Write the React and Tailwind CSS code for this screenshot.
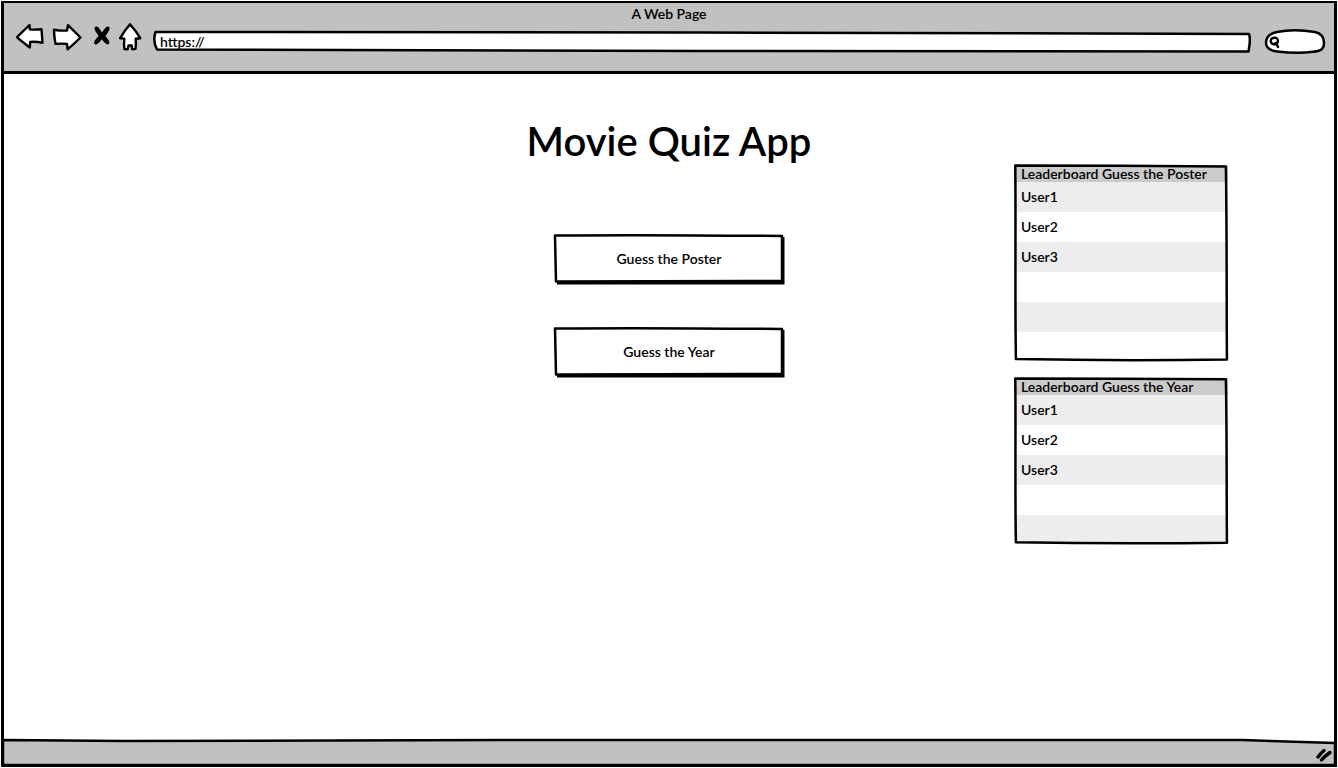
import React from "react";

const stroke = {
  fill: "none",
  stroke: "#000",
  strokeLinecap: "round",
  strokeLinejoin: "round",
};

/* Stretchable hand-drawn outline laid over the box that contains it. */
function Sketch({ d, width = 2.5, viewBox = "0 0 100 100", fill = "none" }) {
  return (
    <svg
      aria-hidden="true"
      viewBox={viewBox}
      preserveAspectRatio="none"
      className="pointer-events-none absolute inset-0 h-full w-full overflow-visible"
    >
      <path d={d} {...stroke} fill={fill} strokeWidth={width} vectorEffect="non-scaling-stroke" />
    </svg>
  );
}

function NavButton({ label, className, viewBox, children }) {
  return (
    <button type="button" aria-label={label} className={`h-7 ${className}`}>
      <svg viewBox={viewBox} className="h-7 w-full overflow-visible" {...stroke} strokeWidth="2.4">
        {children}
      </svg>
    </button>
  );
}

function BrowserBar() {
  return (
    <header className="border-b-[3px] border-black bg-[#c1c1c1] pb-[17px]">
      <p className="mt-px text-center leading-5">A Web Page</p>
      <div className="flex items-start pr-[9px] pl-[11px]">
        <nav aria-label="Browser" className="flex w-[138px] shrink-0 gap-2">
          <NavButton label="Back" className="w-[29px]" viewBox="15 24 29 28">
            <path fill="#fff" d="M17 37.2 29.5 25l.4 4.4c4 .5 8 .2 11.600-.2l1 13.500c-4-.8-8.500-1-12.300-.8l-.4 5.600C25.500 44.200 21 41 17 37.200Z" />
          </NavButton>
          <NavButton label="Forward" className="w-[30px]" viewBox="52 24 30 28">
            <path fill="#fff" d="M80.500 37.500 68 25.200l-1 5.300c-4.200.3-8.800 0-13-.8.2 5 .4 9.500 1.600 14.200 3.800-.3 7.800-.6 11.400.100l.6 5.400c4.200-3.600 8.600-7.600 12.900-11.900Z" />
          </NavButton>
          <NavButton label="Stop" className="w-[21px]" viewBox="90 24 21 28">
            <path fill="#000" stroke="none" d="M94.700 27.500c1-1.800 3.200-1 4.200.400l3.200 4.500c1.400-2 2.700-4.300 4.500-5.600 1.700-1 3.700.600 2.900 2.500-.9 2.500-2.600 4.700-4.200 6.700 1.500 1.600 3.200 3.600 4 5.700.5 1.700-.9 3.200-2.500 2.500-2.100-1-3.400-3.200-4.900-5-1.400 1.800-3 4-5.100 5.100-1.700.7-3.400-.6-2.600-2.500.9-2.300 2.900-4.200 4.500-5.900-1.500-2.400-3.600-4.500-4.200-7.200-.1-.4 0-.800.2-1.200Z" />
          </NavButton>
          <NavButton label="Home" className="w-[26px]" viewBox="119 24 26 28">
            <path fill="#fff" d="M130 24.200c3.600 4 7.200 8.700 10.200 14l-4.500.500c.3 3.500.3 6.900-.2 10.200l-3.300.300-.5-3.700h-3.200l-.8 3.700-3.300-.2c-.6-3.500-.5-6.800-.1-10.400l-4.200-.4c2.800-4.800 6.200-9.800 9.900-14Z" />
          </NavButton>
        </nav>
        <div className="relative mt-[7px] h-[21px] min-w-0 flex-1">
          <Sketch
            viewBox="0 0 1098 21"
            fill="#fff"
            d="M2.500 1 549 1.500 1096 3C1098 8 1096.500 14 1095.500 20.500L549 20 4 18.500C1 13 .5 7 2.500 1Z"
          />
          <input
            type="text"
            aria-label="Address"
            defaultValue="https://"
            className="relative block h-[21px] w-full bg-transparent px-[7px] outline-none"
          />
        </div>
        <label className="relative ml-[14px] mt-[6px] block h-6 w-[60px] shrink-0">
          <Sketch
            viewBox="0 0 60 24"
            fill="#fff"
            d="M12 2C24 -.500 40 .300 50 2 57 3.500 59 8 59 13 59 20.500 54 21 48 21.800 36 23.400 22 22.600 12 21.500 4 20.500 1 17 1 12.500 1 7 5 3.500 12 2Z"
          />
          <svg aria-hidden="true" viewBox="0 0 12 12" className="absolute left-1 top-[6px] h-3 w-3 overflow-visible" {...stroke} strokeWidth="2.4">
            <path d="M5 1.800c2.400-.4 4 1.100 3.900 3.100-.1 2.100-1.800 3.500-3.900 3.300C3 8 1.500 6.500 1.700 4.700c.2-1.700 1.600-2.800 3.300-2.900ZM5.500 7.800l1.500-.8 2 4" />
          </svg>
          <input type="search" aria-label="Search" className="relative h-6 w-full bg-transparent pr-2 pl-5 outline-none" />
        </label>
      </div>
    </header>
  );
}

function MenuButton({ children }) {
  return (
    <button type="button" className="relative h-[50px] w-[230px] pb-[2px]">
      <Sketch viewBox="0 0 230 50" fill="#000" width={0} d="M3 3H230.500V50.500H3Z" />
      <Sketch viewBox="0 0 230 50" fill="#fff" d="M1 1.500C70 .800 150 1.200 228 2V47C150 46.500 70 48 2 47.500Z" />
      <span className="relative">{children}</span>
    </button>
  );
}

function Leaderboard({ title, users, rows }) {
  const cells = Array.from({ length: rows }, (_, i) => users[i] ?? "");
  return (
    <div className="relative">
      <table className="w-full border-collapse text-left">
        <thead>
          <tr className="h-[17px] bg-[#cbcbcb]">
            <th scope="col" className="py-0 pr-1 pl-[7px] leading-[17px] font-semibold">{title}</th>
          </tr>
        </thead>
        <tbody>
          {cells.map((name, i) => (
            <tr key={i} className="h-[30px] odd:bg-[#ededed] even:bg-white last:h-[29px]">
              <td className="pt-0 pb-[2px] pl-[7px]">{name}</td>
            </tr>
          ))}
        </tbody>
      </table>
      <Sketch
        viewBox="0 0 100 100"
        d="M.6 .3C30 .200 70 .500 99 .8 99.500 30 99.300 70 99.500 99.200 70 99.700 30 99.600 .9 99 .4 70 .9 30 .6 .3Z"
      />
    </div>
  );
}

const USERS = ["User1", "User2", "User3"];

export default function App() {
  return (
    <div className="flex min-h-screen flex-col bg-white p-px font-['Lato',sans-serif] text-[14px] font-semibold text-black">
      <div className="flex flex-1 flex-col border-[3px] border-t-2 border-black">
        <BrowserBar />
        <main className="grid flex-1 grid-cols-[1fr_auto_1fr] items-start">
          <section className="col-start-2 flex flex-col items-center pt-[43px]">
            <h1 className="text-[40px] leading-[48px]">Movie Quiz App</h1>
            <div className="mt-[69px] flex flex-col gap-[43px]">
              <MenuButton>Guess the Poster</MenuButton>
              <MenuButton>Guess the Year</MenuButton>
            </div>
          </section>
          <aside className="flex justify-end pt-[91px] pr-[106px]">
            <div className="flex w-[214px] flex-col gap-[17px]">
              <Leaderboard title="Leaderboard Guess the Poster" users={USERS} rows={6} />
              <Leaderboard title="Leaderboard Guess the Year" users={USERS} rows={5} />
            </div>
          </aside>
        </main>
        <footer className="relative flex h-[25px] items-end justify-end">
          <Sketch
            viewBox="0 0 1332 25"
            fill="#c1c1c1"
            d="M-1 1 120 2 500 1 1240 1 1333 4V26H-1Z"
          />
          <svg aria-hidden="true" viewBox="0 0 18 16" className="relative h-4 w-[18px]" {...stroke} strokeWidth="3.4">
            <path d="M2 9C3.500 7 5.500 4.500 8 2.500M5.500 12C8 9 10.500 7 14 4.500" />
          </svg>
        </footer>
      </div>
    </div>
  );
}
